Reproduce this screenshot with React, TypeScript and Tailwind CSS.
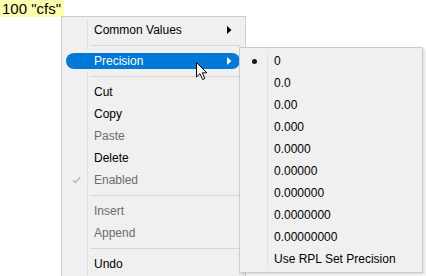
import type { ReactNode } from 'react'

type Item =
  | { kind: 'sep' }
  | { kind: 'item'; label: string; disabled?: boolean; checked?: boolean; submenu?: boolean; active?: boolean }

const mainItems: Item[] = [
  { kind: 'item', label: 'Common Values', submenu: true },
  { kind: 'sep' },
  { kind: 'item', label: 'Precision', submenu: true, active: true },
  { kind: 'sep' },
  { kind: 'item', label: 'Cut' },
  { kind: 'item', label: 'Copy' },
  { kind: 'item', label: 'Paste', disabled: true },
  { kind: 'item', label: 'Delete' },
  { kind: 'item', label: 'Enabled', disabled: true, checked: true },
  { kind: 'sep' },
  { kind: 'item', label: 'Insert', disabled: true },
  { kind: 'item', label: 'Append', disabled: true },
  { kind: 'sep' },
  { kind: 'item', label: 'Undo' },
]

const precisions = ['0', '0.0', '0.00', '0.000', '0.0000', '0.00000', '0.000000', '0.0000000', '0.00000000', 'Use RPL Set Precision']

function Arrow({ white }: { white?: boolean }) {
  return (
    <svg width="5" height="8" viewBox="0 0 5 8" className="shrink-0">
      <path d="M0 0 L4.5 4 L0 8 Z" fill={white ? '#ffffff' : '#000000'} />
    </svg>
  )
}

function Check() {
  return (
    <svg width="9" height="8" viewBox="0 0 9 8">
      <path d="M1 4.2 L3.4 6.6 L8 1.2" fill="none" stroke="#a8a8a8" strokeWidth="1.1" />
    </svg>
  )
}

function Row({ gutter, active, children }: { gutter?: ReactNode; active?: boolean; children: ReactNode }) {
  return (
    <div className={`h-[22px] ${active ? 'py-[3px]' : ''}`}>
      <div className={`flex h-full items-center ${active ? 'rounded-full bg-[#0078d7] text-white' : ''}`}>
        <div
          className={`flex h-full shrink-0 items-center justify-center border-r ${
            active ? 'border-transparent' : 'border-[#e2e2e2]'
          } w-[22px]`}
        >
          {gutter}
        </div>
        <div className="flex h-full flex-1 items-center pl-[6px] pr-[8px]">{children}</div>
      </div>
    </div>
  )
}

function Separator() {
  return (
    <div className="flex h-[9px]">
      <div className="h-full w-[22px] shrink-0 border-r border-[#e2e2e2]" />
      <div className="flex flex-1 items-center pl-[2px]">
        <div className="h-px w-full bg-[#d7d7d7]" />
      </div>
    </div>
  )
}

export default function App() {
  return (
    <div
      className="relative h-[276px] w-[426px] overflow-hidden bg-white text-[12px] text-black"
      style={{ fontFamily: '"Liberation Sans", Arial, sans-serif' }}
    >
      <div className="inline-block h-[17px] bg-[#ffffb0] pl-[2px] pr-[3px] text-[15px] leading-[17px]">100 "cfs"</div>

      {/* main context menu */}
      <div className="absolute left-[61px] top-[16px] h-[270px] w-[185px] border border-[#cccccc] bg-[#f0f0f0] pt-[2px] pl-[4px] pr-[5px]">
        {mainItems.map((it, i) =>
          it.kind === 'sep' ? (
            <Separator key={i} />
          ) : (
            <Row key={i} active={it.active} gutter={it.checked ? <Check /> : null}>
              <span className={`flex-1 ${it.disabled ? 'text-[#6d6d6d]' : ''}`}>{it.label}</span>
              {it.submenu && <Arrow white={it.active} />}
            </Row>
          ),
        )}
      </div>

      {/* precision submenu */}
      <div className="absolute left-[239px] top-[47px] w-[184px] border border-[#cccccc] bg-[#f0f0f0] pt-[2px] pb-[2px] pl-[1px] shadow-[2px_2px_2px_rgba(0,0,0,0.12)]">
        {precisions.map((p, i) => (
          <div key={p} className="flex h-[22px] items-center">
            <div className="flex h-full w-[27px] shrink-0 items-center justify-center border-r border-[#e2e2e2] pl-[1px]">
              {i === 0 && <div className="h-[5px] w-[5px] rounded-full bg-[#1a1a1a]" />}
            </div>
            <div className="flex h-full flex-1 items-center pl-[6px]">{p}</div>
          </div>
        ))}
      </div>

      {/* mouse pointer */}
      <svg className="absolute left-[195px] top-[61px]" width="13" height="20" viewBox="0 0 13 20">
        <path
          d="M1.5 1.5 L1.5 16 L5 12.7 L7.6 18.5 L9.8 17.5 L7.3 11.8 L11.8 11.8 Z"
          fill="#ffffff"
          stroke="#000000"
          strokeWidth="1"
          strokeLinejoin="miter"
        />
      </svg>
    </div>
  )
}
